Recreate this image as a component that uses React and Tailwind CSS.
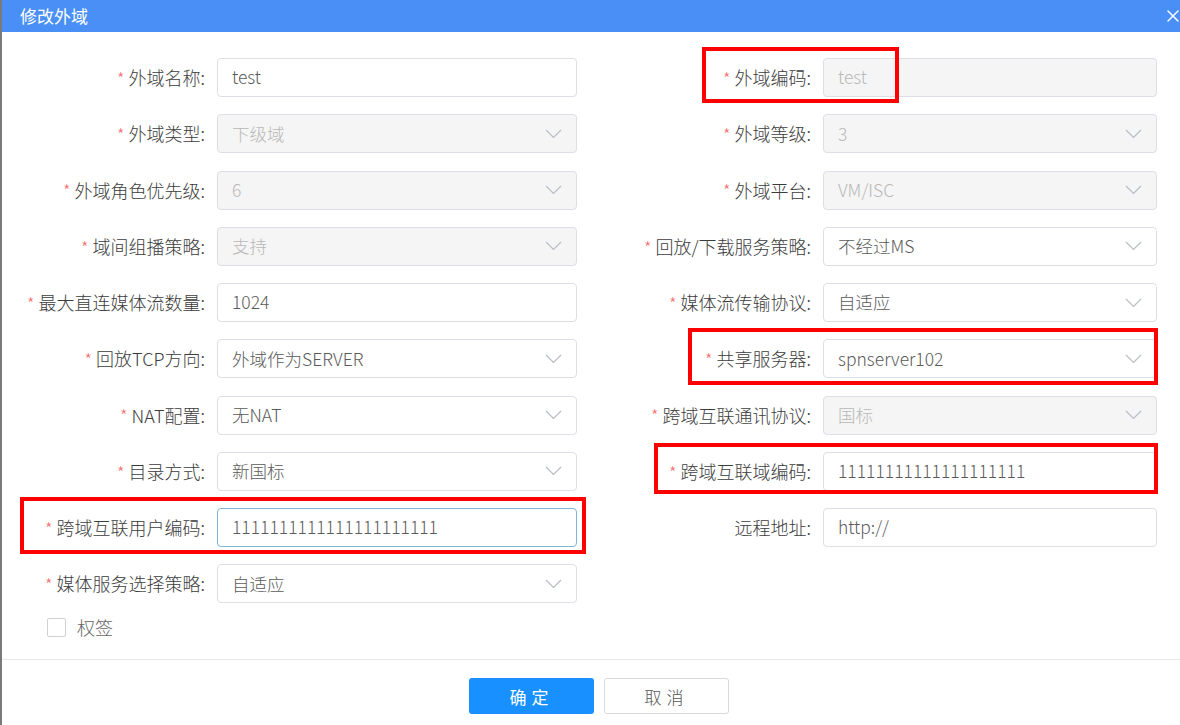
import { X } from "lucide-react";

const leftRows = [
  { label: "外域名称", value: "test", type: "input" },
  { label: "外域类型", value: "下级域", type: "select", disabled: true },
  { label: "外域角色优先级", value: "6", type: "select", disabled: true },
  { label: "域间组播策略", value: "支持", type: "select", disabled: true },
  { label: "最大直连媒体流数量", value: "1024", type: "input" },
  { label: "回放TCP方向", value: "外域作为SERVER", type: "select" },
  { label: "NAT配置", value: "无NAT", type: "select" },
  { label: "目录方式", value: "新国标", type: "select" },
  { label: "跨域互联用户编码", value: "1111111111111111111111", type: "input", focus: true },
  { label: "媒体服务选择策略", value: "自适应", type: "select" },
];

const rightRows = [
  { label: "外域编码", value: "test", type: "input", disabled: true },
  { label: "外域等级", value: "3", type: "select", disabled: true },
  { label: "外域平台", value: "VM/ISC", type: "select", disabled: true },
  { label: "回放/下载服务策略", value: "不经过MS", type: "select" },
  { label: "媒体流传输协议", value: "自适应", type: "select" },
  { label: "共享服务器", value: "spnserver102", type: "select" },
  { label: "跨域互联通讯协议", value: "国标", type: "select", disabled: true },
  { label: "跨域互联域编码", value: "11111111111111111111", type: "input" },
  { label: "远程地址", value: "http://", type: "input", optional: true },
];

function Chevron() {
  return (
    <svg width="17" height="10" viewBox="0 0 17 10" className="shrink-0">
      <path d="M1 1 L8.5 8.5 L16 1" fill="none" stroke="#b8bcc4" strokeWidth="1.2" />
    </svg>
  );
}

function Field({ row, width }) {
  const border = row.focus ? "border-[#7fb5d5]" : "border-[#dcdfe6]";
  const bg = row.disabled ? "bg-[#f5f5f5]" : "bg-white";
  const color = row.disabled ? "text-[#b8b8b8]" : "text-[#5a5a5a]";
  return (
    <div
      className={`flex items-center justify-between h-[39px] rounded-[4px] border ${border} ${bg} pl-[14px] pr-[14px] ${width}`}
    >
      <span className={`text-[17.5px] font-light ${color}`}>{row.value}</span>
      {row.type === "select" && <Chevron />}
    </div>
  );
}

function Label({ row, width }) {
  return (
    <div className={`flex items-center justify-end pr-[12px] text-[18px] font-light text-[#3c3c3c] whitespace-nowrap ${width}`}>
      {!row.optional && <span className="text-[#f56c6c] text-[17px] mr-[4px]">*</span>}
      <span>{row.label}:</span>
    </div>
  );
}

export default function App() {
  return (
    <div
      className="relative w-[1180px] h-[725px] bg-[#7a7a7a] overflow-hidden"
      style={{ fontFamily: '"Noto Sans CJK SC", "Noto Sans", sans-serif' }}
    >
      <div className="absolute left-[2px] top-0 right-0 bottom-0 bg-white flex flex-col">
        {/* header */}
        <div className="h-[32px] bg-[#4a8ff5] flex items-center justify-between pl-[18px] shrink-0">
          <span className="text-white text-[17px]">修改外域</span>
          <X className="text-white mr-[-3px]" size={20} strokeWidth={1.8} />
        </div>

        {/* form */}
        <div className="flex pt-[26px]">
          <div className="flex flex-col gap-[17.25px]">
            {leftRows.map((r) => (
              <div key={r.label} className="flex">
                <Label row={r} width="w-[215px]" />
                <Field row={r} width="w-[360px]" />
              </div>
            ))}
          </div>
          <div className="flex flex-col gap-[17.25px] ml-[2px]">
            {rightRows.map((r) => (
              <div key={r.label} className="flex">
                <Label row={r} width="w-[244px]" />
                <Field row={r} width="w-[334px]" />
              </div>
            ))}
          </div>
        </div>

        {/* checkbox */}
        <div className="flex items-center pl-[45px] mt-[14px] h-[20px]">
          <div className="w-[19px] h-[19px] border border-[#d0d0d0] rounded-[2px] bg-white" />
          <span className="ml-[11px] text-[18px] font-light text-[#666]">权签</span>
        </div>

        {/* footer */}
        <div className="mt-[22px] border-t border-[#e8e8e8] flex justify-center gap-[10px] pt-[18px] pl-[16px]">
          <button className="w-[125px] h-[36px] rounded-[3px] bg-[#1890ff] text-white text-[17px] tracking-[5px]">
            确定
          </button>
          <button className="w-[125px] h-[36px] rounded-[3px] border border-[#d9d9d9] bg-white text-[#555] text-[17px] font-light tracking-[5px]">
            取消
          </button>
        </div>
      </div>

      {/* red highlight boxes */}
      <div className="absolute left-[702px] top-[47px] w-[197px] h-[56px] border-[4px] border-[#ff0000]" />
      <div className="absolute left-[688px] top-[328px] w-[470px] h-[57px] border-[4px] border-[#ff0000]" />
      <div className="absolute left-[654px] top-[443px] w-[504px] h-[51px] border-[4px] border-[#ff0000]" />
      <div className="absolute left-[20px] top-[497px] w-[566px] h-[57px] border-[4px] border-[#ff0000]" />
    </div>
  );
}
